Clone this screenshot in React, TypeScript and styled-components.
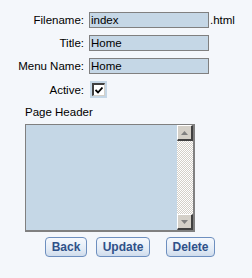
import React from 'react';
import styled, { createGlobalStyle } from 'styled-components';

const GlobalStyle = createGlobalStyle`
    html, body {
        margin: 0;
        padding: 0;
        background: #f4f7fb;
    }
    body {
        font-family: 'Liberation Sans', Arial, sans-serif;
        font-size: 11px;
        color: #000;
    }
`;

const Page = styled.div`
    width: 252px;
    height: 278px;
    padding-top: 12px;
    box-sizing: border-box;
`;

const FieldGrid = styled.div`
    display: grid;
    grid-template-columns: 84px auto;
    column-gap: 5px;
    row-gap: 7px;
    align-items: center;
`;

const Label = styled.label`
    text-align: right;
    font-size: 11.5px;
    line-height: 16px;
`;

const InputCell = styled.div`
    display: flex;
    align-items: center;
`;

const TextBox = styled.input`
    width: 120px;
    height: 16px;
    box-sizing: border-box;
    margin: 0;
    padding: 0 1px;
    border: 1px solid #808080;
    background: #c5d7e6;
    font-family: 'Liberation Sans', Arial, sans-serif;
    font-size: 11.5px;
    color: #000;
    outline: none;
`;

const Suffix = styled.span`
    font-size: 11.5px;
    margin-left: 1px;
`;

const CheckFrame = styled.span`
    display: inline-flex;
    align-items: center;
    justify-content: center;
    width: 17px;
    height: 17px;
    margin-left: 1px;
    background: #c5d7e6;
`;

const CheckBox = styled.span`
    display: inline-flex;
    align-items: center;
    justify-content: center;
    width: 13px;
    height: 13px;
    box-sizing: border-box;
    background: #fff;
    border-style: solid;
    border-width: 2px 1px 1px 2px;
    border-color: #404040 #d4d0c8 #d4d0c8 #404040;
`;

const SectionTitle = styled.div`
    margin: 7px 0 0 25px;
    font-size: 11.5px;
    line-height: 14px;
`;

const EditorBox = styled.div`
    display: flex;
    width: 170px;
    height: 108px;
    margin: 5px 0 0 25px;
    box-sizing: border-box;
    border: 1px solid #808080;
    border-right-width: 2px;
    border-bottom-width: 2px;
`;

const EditorArea = styled.div`
    flex: 1;
    background: #c5d7e6;
`;

const ScrollTrack = styled.div`
    display: flex;
    flex-direction: column;
    justify-content: space-between;
    width: 16px;
    background: repeating-conic-gradient(#d4d0c8 0 25%, #ffffff 0 50%) 0 0 / 2px 2px;
`;

const ScrollButton = styled.div`
    display: flex;
    align-items: center;
    justify-content: center;
    width: 16px;
    height: 16px;
    box-sizing: border-box;
    background: #d4d0c8;
    border-style: solid;
    border-width: 1px 2px 2px 1px;
    border-color: #ffffff #404040 #404040 #ffffff;
`;

const ButtonRow = styled.div`
    display: flex;
    margin: 5px 0 0 45px;
    gap: 9px;
`;

const ActionButton = styled.button<{ $width: number; $extraGap?: number }>`
    width: ${(p) => p.$width}px;
    height: 20px;
    margin: 0 0 0 ${(p) => p.$extraGap ?? 0}px;
    padding: 0;
    box-sizing: border-box;
    border: 1px solid #6d8fbf;
    border-radius: 4px;
    background: linear-gradient(#f6f9fd 0%, #e4ecf6 60%, #cfdcec 100%);
    font-family: 'Liberation Sans', Arial, sans-serif;
    font-weight: bold;
    font-size: 12px;
    color: #2f5189;
    cursor: pointer;
`;

const Arrow: React.FC<{ down?: boolean }> = ({ down }) => (
    <svg width="7" height="4" viewBox="0 0 7 4">
        <polygon points={down ? '0,0 7,0 3.5,4' : '0,4 7,4 3.5,0'} fill="#808080" />
    </svg>
);

const fields = [
    { label: 'Filename:', value: 'index', suffix: '.html' },
    { label: 'Title:', value: 'Home' },
    { label: 'Menu Name:', value: 'Home' },
];

export default function App() {
    return (
        <Page>
            <GlobalStyle />
            <FieldGrid>
                {fields.map((f) => (
                    <React.Fragment key={f.label}>
                        <Label>{f.label}</Label>
                        <InputCell>
                            <TextBox defaultValue={f.value} />
                            {f.suffix && <Suffix>{f.suffix}</Suffix>}
                        </InputCell>
                    </React.Fragment>
                ))}
                <Label>Active:</Label>
                <InputCell>
                    <CheckFrame>
                        <CheckBox>
                            <svg width="8" height="7" viewBox="0 0 8 7">
                                <polyline
                                    points="0.5,3 3,5.5 7.5,0.5"
                                    fill="none"
                                    stroke="#000"
                                    strokeWidth="1.8"
                                />
                            </svg>
                        </CheckBox>
                    </CheckFrame>
                </InputCell>
            </FieldGrid>
            <SectionTitle>Page Header</SectionTitle>
            <EditorBox>
                <EditorArea />
                <ScrollTrack>
                    <ScrollButton>
                        <Arrow />
                    </ScrollButton>
                    <ScrollButton>
                        <Arrow down />
                    </ScrollButton>
                </ScrollTrack>
            </EditorBox>
            <ButtonRow>
                <ActionButton $width={42}>Back</ActionButton>
                <ActionButton $width={54}>Update</ActionButton>
                <ActionButton $width={49} $extraGap={7}>
                    Delete
                </ActionButton>
            </ButtonRow>
        </Page>
    );
}
